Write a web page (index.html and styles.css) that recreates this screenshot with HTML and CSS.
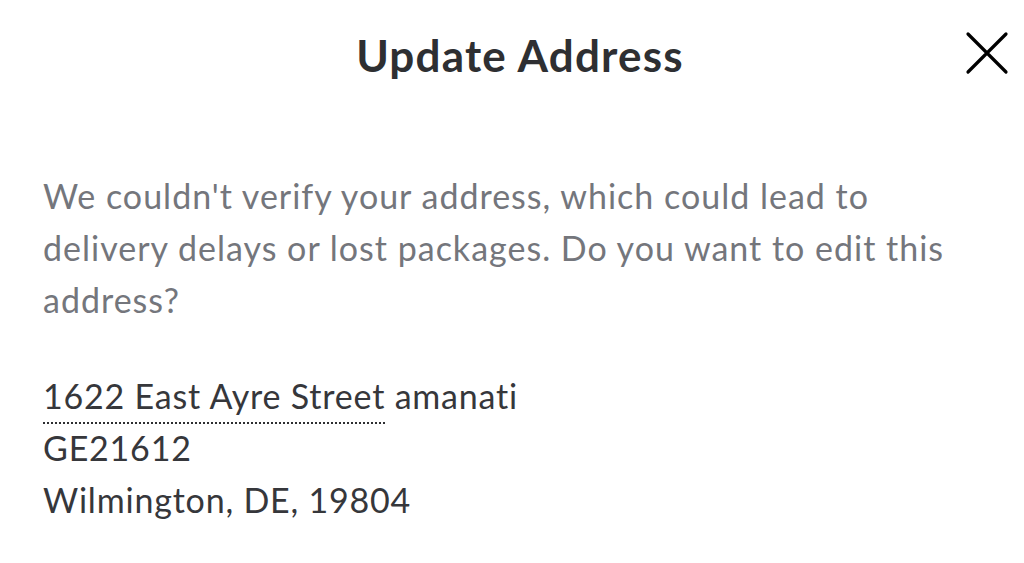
FILE: index.html
```html
<!DOCTYPE html>
<html>
<head>
<meta charset="utf-8">
<link rel="stylesheet" href="styles.css">
</head>
<body>
<div class="modal">
  <header class="header">
    <h1 class="title">Update Address</h1>
    <button class="close" aria-label="Close">
      <svg width="44" height="44" viewBox="0 0 44 44"><path d="M3 3L41 41M41 3L3 41" stroke="#000" stroke-width="3.2" stroke-linecap="round" fill="none"/></svg>
    </button>
  </header>
  <p class="message">We couldn't verify your address, which could lead to delivery delays or lost packages. Do you want to edit this address?</p>
  <div class="address">
    <div><span class="dotted">1622 East Ayre Street</span> amanati</div>
    <div>GE21612</div>
    <div>Wilmington, DE, 19804</div>
  </div>
</div>
</body>
</html>
```
FILE: styles.css
```css
html, body {
  margin: 0;
  padding: 0;
  background: #ffffff;
}
body {
  font-family: Lato, "Noto Sans", sans-serif;
  width: 1024px;
  height: 563px;
  overflow: hidden;
}
.modal {
  padding: 0 43px;
}
.header {
  position: relative;
  height: 112px;
  display: flex;
  align-items: center;
  justify-content: center;
}
.title {
  margin: 0;
  font-size: 44px;
  font-weight: 700;
  color: #2e2f32;
  letter-spacing: 1.2px;
  padding-bottom: 2px;
  padding-left: 16px;
}
.close {
  position: absolute;
  right: -28px;
  top: 31px;
  border: 0;
  background: none;
  padding: 0;
  width: 44px;
  height: 44px;
}
.message {
  margin: 58px 0 0;
  font-size: 34px;
  line-height: 52px;
  letter-spacing: 1px;
  color: #74767c;
  max-width: 920px;
}
.address {
  margin-top: 44px;
  font-size: 34px;
  line-height: 52px;
  letter-spacing: 0.8px;
  color: #36373b;
}
.dotted {
  border-bottom: 2px dotted #2e2f32;
  padding-bottom: 6px;
}
```
